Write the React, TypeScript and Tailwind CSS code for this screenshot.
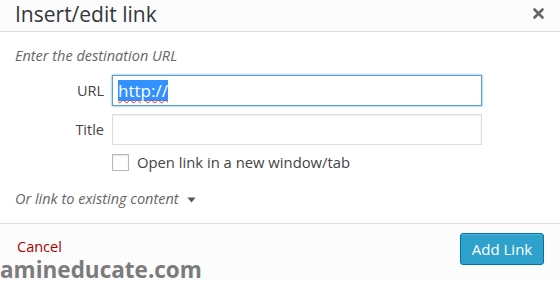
export default function App() {
  return (
    <div className="relative w-[560px] h-[281px] overflow-hidden bg-white font-['Open_Sans',sans-serif] text-[#444]">
      <div className="flex h-[32px] items-center justify-between border-b border-[#dddddd] bg-[#fcfcfc] pl-[15px] pr-[12px]">
        <h1 className="-mt-[4px] text-[21px] leading-[26px] text-[#32373c]">Insert/edit link</h1>
        <button className="-mt-[4px] flex h-[20px] w-[20px] items-center justify-center text-[#666]">
          <svg width="11" height="11" viewBox="0 0 11 11">
            <path d="M1.5 1.5 L9.5 9.5 M9.5 1.5 L1.5 9.5" stroke="currentColor" strokeWidth="2.6" strokeLinecap="round" />
          </svg>
        </button>
      </div>

      <div className="h-[191px] px-[15px] pt-[15px]">
        <p className="text-[14.5px] italic leading-[18px] text-[#666]">Enter the destination URL</p>
        <div className="mt-[10px] flex flex-col gap-[8px]">
          <div className="flex items-center">
            <label className="w-[97px] pr-[8px] text-right text-[14.5px] text-[#444]">URL</label>
            <div className="flex h-[31px] w-[370px] items-center border border-[#5b9dd9] px-[5px] shadow-[0_0_2px_rgba(30,140,190,0.8)]">
              <span className="bg-[#3390ff] text-[17px] leading-[21px] text-white underline decoration-wavy decoration-[#d33] decoration-1 underline-offset-2">http://</span>
            </div>
          </div>
          <div className="flex items-center">
            <label className="w-[97px] pr-[8px] text-right text-[14.5px] text-[#444]">Title</label>
            <div className="h-[31px] w-[370px] border border-[#dddddd] shadow-[inset_0_1px_2px_rgba(0,0,0,0.07)]" />
          </div>
          <div className="flex items-center pl-[97px]">
            <span className="h-[17px] w-[17px] border border-[#b4b9be] bg-white shadow-[inset_0_1px_2px_rgba(0,0,0,0.1)]" />
            <span className="ml-[8px] text-[14.8px] leading-[18px] text-[#444]">Open link in a new window/tab</span>
          </div>
        </div>
        <div className="mt-[19px] flex items-center gap-[8px]">
          <span className="text-[14.5px] italic leading-[18px] text-[#666]">Or link to existing content</span>
          <svg width="9" height="6" viewBox="0 0 9 6" className="mt-[2px]">
            <path d="M0.5 0.5 L8.5 0.5 L4.5 5.5 Z" fill="#555" />
          </svg>
        </div>
      </div>

      <div className="flex h-[58px] items-start justify-between border-t border-[#dddddd] bg-[#fcfcfc] pl-[17px] pr-[16px] pt-[9px]">
        <a className="mt-[5px] text-[14.5px] leading-[18px] text-[#a00]">Cancel</a>
        <button className="h-[32px] w-[84px] rounded-[3px] border border-[#0074a2] bg-[#2ea2cc] text-[15px] text-white shadow-[inset_0_1px_0_rgba(120,200,230,0.5)]">
          Add Link
        </button>
      </div>

      <div className="absolute bottom-0 left-0 text-[22.5px] font-bold leading-[22px] text-[#7b7b7b]">
        amineducate.com
      </div>
    </div>
  );
}
